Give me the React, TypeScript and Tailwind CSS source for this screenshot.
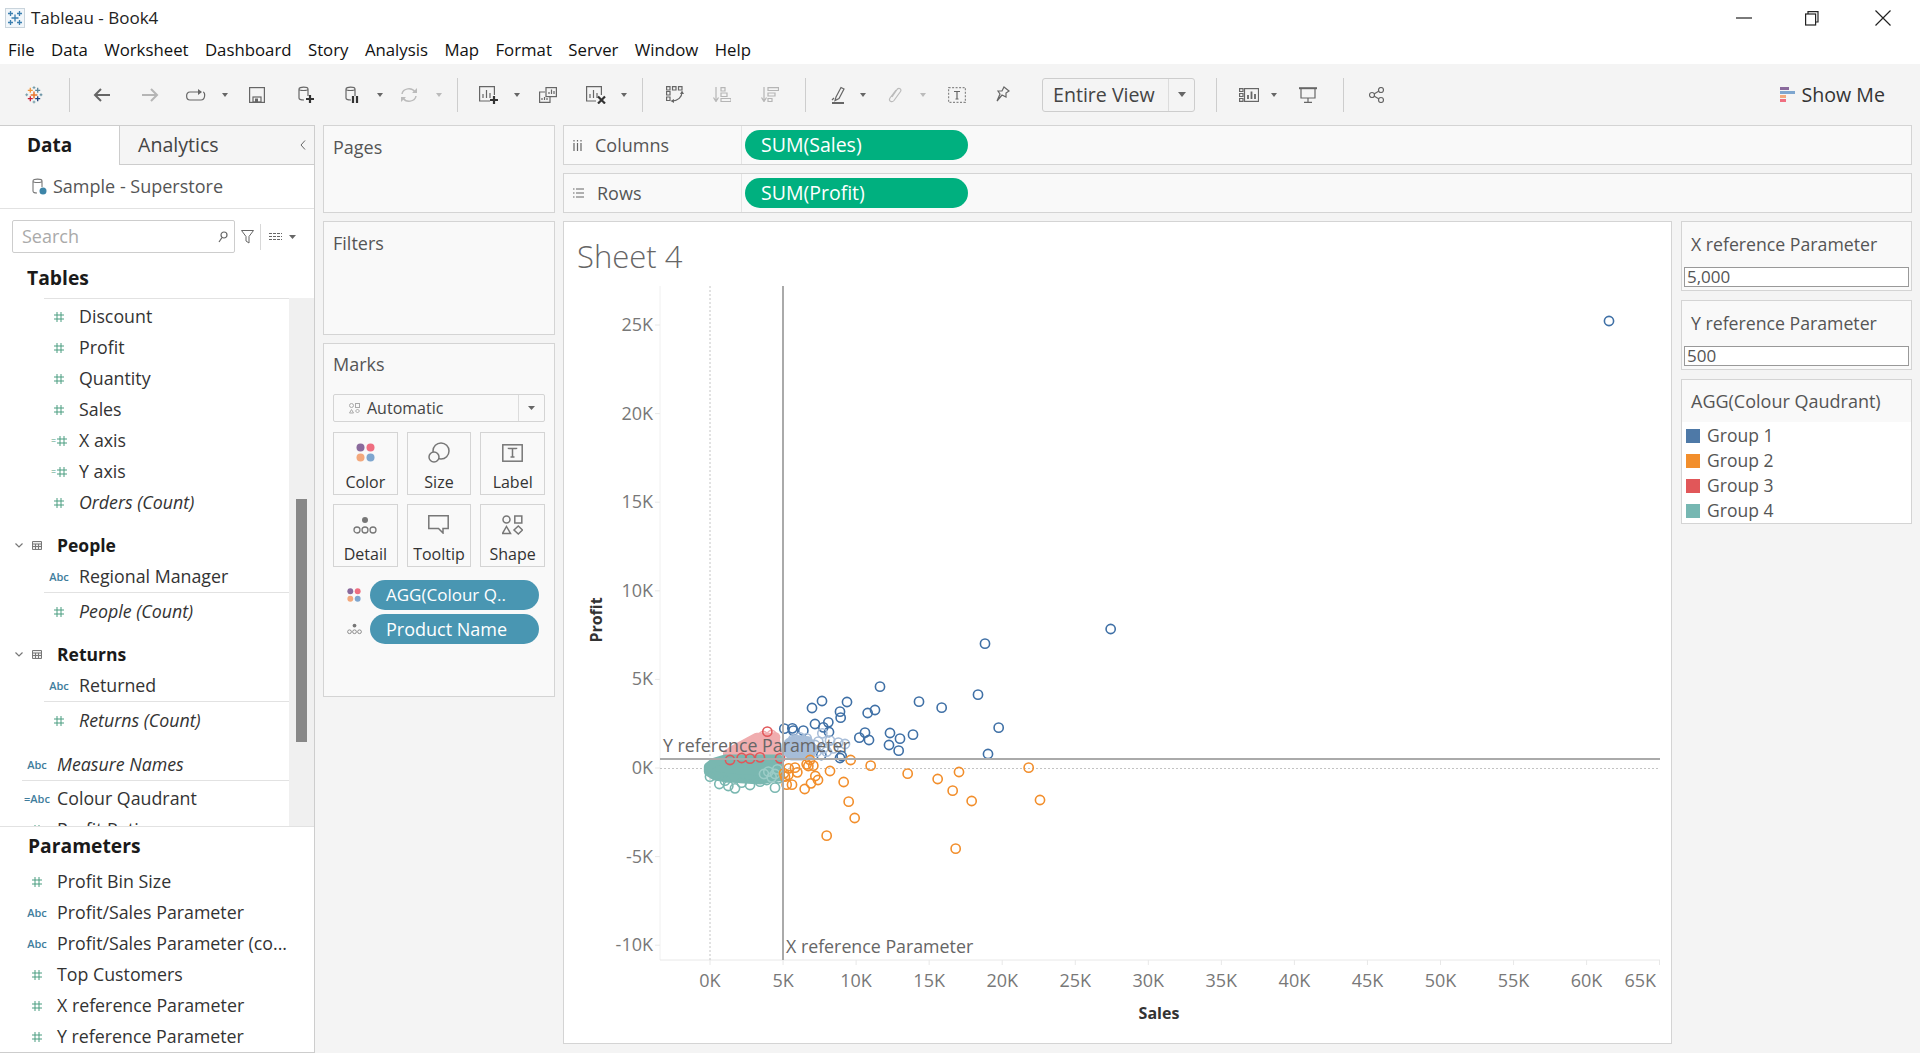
import type { ReactNode } from "react";

type Pt = [number, number];

const font = { fontFamily: "'Open Sans', 'Noto Sans', sans-serif" };

// chart coordinates are page pixels; the cluster is read off a 3x crop at (660,620)
const z = ([x, y]: Pt): Pt => [660 + x / 3, 620 + y / 3];

const BLUE: Pt[] = [
  [975, 71], [660, 200], [954, 224], [777, 245], [561, 246], [486, 243], [456, 264], [845, 263],
  [645, 270], [623, 279], [540, 275], [542, 293], [1016, 323], [465, 312], [505, 307], [490, 322],
  [507, 336], [430, 332], [373, 326], [397, 325], [400, 332], [615, 338], [690, 339], [598, 353],
  [627, 360], [720, 356], [759, 344], [687, 375], [716, 392], [984, 402], [540, 414], [545, 408],
  [484, 405], [1352, 27], [2847, -897],
];
const PALE_BLUE: Pt[] = [
  [555, 372], [535, 368], [510, 362], [487, 340], [475, 365], [440, 355], [420, 352], [400, 358],
  [455, 385], [470, 395], [490, 385], [520, 385], [500, 395], [465, 375], [450, 400],
];
const ORANGE: Pt[] = [
  [572, 420], [632, 437], [510, 453], [743, 461], [833, 477], [897, 456], [1106, 443], [1140, 540],
  [935, 543], [878, 512], [551, 486], [566, 545], [584, 594], [500, 647], [887, 686], [434, 507],
  [453, 490], [474, 480], [466, 468], [396, 494], [380, 494], [412, 457], [386, 445], [405, 443],
  [372, 460], [440, 433], [460, 437], [450, 420], [445, 438], [385, 465], [375, 470],
];
const TEAL: Pt[] = [
  [178, 492], [205, 498], [225, 505], [270, 495], [345, 503], [300, 485], [245, 488], [150, 470],
  [320, 480], [195, 482], [355, 475],
];
const RED: Pt[] = [[322, 335], [210, 420], [245, 414], [270, 416], [300, 412], [360, 415]];
const PALE_RED: Pt[] = [
  [345, 352], [310, 348], [290, 358], [270, 368], [335, 345], [250, 378], [225, 392], [205, 402],
];
const TEAL_SPECK: Pt[] = [[325, 455], [345, 462], [335, 472], [312, 462], [352, 448]];

const LEFT_ROWS = ["25K", "20K", "15K", "10K", "5K", "0K", "-5K", "-10K"];
const X_TICKS = ["0K", "5K", "10K", "15K", "20K", "25K", "30K", "35K", "40K", "45K", "50K", "55K", "60K"];
const MENU = ["File", "Data", "Worksheet", "Dashboard", "Story", "Analysis", "Map", "Format", "Server", "Window", "Help"];

function Rings({ pts, color, opacity = 1 }: { pts: Pt[]; color: string; opacity?: number }) {
  return (
    <g fill="none" stroke={color} strokeWidth={1.6} opacity={opacity}>
      {pts.map((p, i) => {
        const [x, y] = z(p);
        return <circle key={i} cx={x} cy={y} r={4.6} />;
      })}
    </g>
  );
}

function Blob({ pts, color }: { pts: Pt[]; color: string }) {
  return (
    <polygon
      points={pts.map((p) => z(p).join(",")).join(" ")}
      fill={color}
      stroke={color}
      strokeWidth={9}
      strokeLinejoin="round"
    />
  );
}

function Chart() {
  const x0 = 710;
  const step = 73.05;
  return (
    <svg viewBox="564 275 1107 767" className="block h-[767px] w-[1107px]" style={font}>
      {/* axes */}
      <line x1="660" y1="286" x2="660" y2="960" stroke="#f0f0f0" />
      <line x1="660" y1="960" x2="1660" y2="960" stroke="#e8e8e8" />
      {X_TICKS.map((_, i) => (
        <line key={i} x1={x0 + i * step} y1="960" x2={x0 + i * step} y2="965" stroke="#e8e8e8" />
      ))}
      <line x1="1659.5" y1="960" x2="1659.5" y2="965" stroke="#e8e8e8" />
      {LEFT_ROWS.map((_, i) => (
        <line key={i} x1="655" y1={325 + i * 88.6} x2="660" y2={325 + i * 88.6} stroke="#e8e8e8" />
      ))}
      <line x1="710" y1="286" x2="710" y2="960" stroke="#c4c4c4" strokeDasharray="2 2" />
      <line x1="660" y1="768.5" x2="1660" y2="768.5" stroke="#c4c4c4" strokeDasharray="2 2" />

      {/* clusters */}
      <Blob pts={[[205, 405], [215, 392], [290, 352], [345, 352], [355, 410]]} color="#f0adaf" />
      <Rings pts={PALE_RED} color="#f0adaf" />
      <Rings pts={BLUE} color="#3f70a6" />
      <Blob pts={[[385, 400], [385, 368], [405, 358], [445, 362], [460, 392], [430, 408], [395, 408]]} color="#a6bdd8" />
      <Rings pts={PALE_BLUE} color="#a8bed9" />
      <Blob pts={[[145, 440], [160, 428], [195, 417], [355, 417], [362, 470], [300, 480], [205, 474], [165, 468], [145, 455]]} color="#79b7b0" />
      <Rings pts={RED} color="#e15759" />
      <Rings pts={TEAL} color="#79b7b0" />
      <Rings pts={TEAL_SPECK} color="#a5d2cd" opacity={0.8} />
      <Rings pts={ORANGE} color="#f28e2b" />

      {/* reference lines */}
      <line x1="660" y1="759" x2="1660" y2="759" stroke="#aaa" strokeWidth="2" />
      <line x1="783" y1="286" x2="783" y2="960" stroke="#aaa" strokeWidth="2" />

      <g fontSize="17.8" fill="#666">
        <text x="663" y="752">Y reference Parameter</text>
        <text x="786" y="953">X reference Parameter</text>
      </g>
      <g fontSize="18" fill="#787878">
        {LEFT_ROWS.map((t, i) => (
          <text key={t} x="653" y={331 + i * 88.6} textAnchor="end">{t}</text>
        ))}
        {X_TICKS.map((t, i) => (
          <text key={t} x={x0 + i * step} y="987" textAnchor="middle">{t}</text>
        ))}
        <text x="1656" y="987" textAnchor="end">65K</text>
      </g>
      <g fontSize="16" fontWeight="700" fill="#333">
        <text x="1159" y="1019" textAnchor="middle">Sales</text>
        <text transform="translate(602,620) rotate(-90)" textAnchor="middle">Profit</text>
      </g>
    </svg>
  );
}

function Plus({ x, y, a, color, w = 1.3 }: { x: number; y: number; a: number; color: string; w?: number }) {
  return (
    <path d={`M${x - a} ${y}H${x + a}M${x} ${y - a}V${y + a}`} stroke={color} strokeWidth={w} fill="none" />
  );
}

function TableauMark() {
  return (
    <svg width="18" height="18" viewBox="0 0 18 18" className="ml-[25px] shrink-0">
      <Plus x={9} y={9} a={3.4} color="#e8762d" w={1.5} />
      <Plus x={5.3} y={4.3} a={2.5} color="#f0963a" />
      <Plus x={12.7} y={4.3} a={2.5} color="#5b879b" />
      <Plus x={5.3} y={12.7} a={2.5} color="#c72037" />
      <Plus x={12.7} y={12.7} a={2.5} color="#1f447e" />
      <Plus x={9} y={1.6} a={1.4} color="#7099a6" w={1} />
      <Plus x={9} y={16} a={1.4} color="#7099a6" w={1} />
      <Plus x={1.7} y={8.8} a={1.4} color="#7099a6" w={1} />
      <Plus x={16} y={8.8} a={1.4} color="#59879b" w={1} />
    </svg>
  );
}

function Sep({ className }: { className: string }) {
  return <div className={`h-[34px] w-px shrink-0 bg-[#cdcdcd] ${className}`} />;
}

function Caret({ className, light }: { className: string; light?: boolean }) {
  return (
    <svg width="6" height="4" viewBox="0 0 6 4" className={`shrink-0 ${className}`}>
      <path d="M0 0H6L3 4Z" fill={light ? "#bbb" : "#666"} />
    </svg>
  );
}

function Glyph({ w, h, className, children, stroke = "#666" }: { w: number; h: number; className: string; children: ReactNode; stroke?: string }) {
  return (
    <svg width={w} height={h} viewBox={`0 0 ${w} ${h}`} fill="none" stroke={stroke} strokeWidth="1.2" className={`shrink-0 ${className}`}>
      {children}
    </svg>
  );
}

function Cylinder() {
  return <path d="M1 3C1 .5 10 .5 10 3V10M1 3C1 5 10 5 10 3M1 3V12C1 13.5 3 14 6 14" />;
}

function Toolbar() {
  return (
    <div className="flex h-[61px] shrink-0 items-center bg-[#f4f4f4]">
      <TableauMark />
      <Sep className="ml-[26px]" />
      <Glyph w={18} h={14} className="ml-[23px]" stroke="#666">
        <path d="M17 7H2M8 1L2 7L8 13" strokeWidth="2" />
      </Glyph>
      <Glyph w={18} h={14} className="ml-[30px]" stroke="#b5b5b5">
        <path d="M1 7H16M10 1L16 7L10 13" strokeWidth="2" />
      </Glyph>
      <Glyph w={20} h={12} className="ml-[27px]">
        <path d="M12 3H4C-.5 3 -.5 11 4 11H15C19.5 11 19.5 3 17 3" />
        <path d="M12 0L16 3L12 6Z" fill="#666" stroke="none" />
      </Glyph>
      <Caret className="ml-[16px]" />
      <Glyph w={16} h={16} className="ml-[21px]">
        <rect x=".6" y=".6" width="14.8" height="14.8" />
        <rect x="4" y="10" width="8" height="5" />
        <rect x="6" y="11.5" width="3" height="3.5" fill="#666" stroke="none" />
      </Glyph>
      <Glyph w={16} h={17} className="ml-[33px]">
        <Cylinder />
        <path d="M12 9V17M8 13H16" stroke="#333" strokeWidth="2.2" />
      </Glyph>
      <Glyph w={14} h={17} className="ml-[31px]">
        <Cylinder />
        <path d="M8 10V17M12 10V17" stroke="#333" strokeWidth="2.2" />
      </Glyph>
      <Caret className="ml-[18px]" />
      <Glyph w={18} h={16} className="ml-[17px]" stroke="#bbb">
        <path d="M2 7C3 1 12 0 15 5M16 9C15 15 6 16 3 11" strokeWidth="1.5" />
        <path d="M17 1V6H12M1 15V10H6" fill="#bbb" stroke="none" />
      </Glyph>
      <Caret className="ml-[18px]" light />
      <Sep className="ml-[15px]" />
      <Glyph w={20} h={18} className="ml-[21px]">
        <path d="M11 15H.6V.6H15.4V9" />
        <path d="M4 12V8M7.5 12V4M11 12V7" />
        <path d="M15 10V18M11 14H19" stroke="#333" strokeWidth="2.2" />
      </Glyph>
      <Caret className="ml-[15px]" />
      <Glyph w={18} h={16} className="ml-[19px]">
        <rect x="7" y=".6" width="10.4" height="9" />
        <path d="M10 7V5M12.5 7V2.5M15 7V4" />
        <path d="M6 5H.6V15.4H11V10" />
        <path d="M3 13V11M5.5 13V10M8 13V11" />
      </Glyph>
      <Glyph w={20} h={18} className="ml-[29px]">
        <path d="M10 15H.6V.6H15.4V9" />
        <path d="M4 12V8M7.5 12V4M11 12V7" />
        <path d="M12 10.5L19 17.5M19 10.5L12 17.5" stroke="#333" strokeWidth="2.2" />
      </Glyph>
      <Caret className="ml-[15px]" />
      <Sep className="ml-[15px]" />
      <Glyph w={18} h={17} className="ml-[23px]">
        <path d="M.6.6H4V4H.6ZM6.5.6H10V4H6.5ZM12.5.6H16V4H12.5ZM.6 5.5H4V9H.6ZM.6 11H4V14.5H.6Z" />
        <path d="M16 6C16 11 12 15 6 15" />
        <path d="M16 4.5L18 8H14ZM8 13V17L4.5 15Z" fill="#666" stroke="none" />
      </Glyph>
      <Glyph w={18} h={15} className="ml-[29px]" stroke="#b5b5b5">
        <path d="M3 0V13M.5 10.5L3 14.5L5.5 10.5" />
        <path d="M8 .6H12V4H8ZM8 6H14V9.5H8ZM8 11.5H18V14.5H8Z" />
      </Glyph>
      <Glyph w={18} h={15} className="ml-[30px]" stroke="#b5b5b5">
        <path d="M3 0V13M.5 10.5L3 14.5L5.5 10.5" />
        <path d="M7 .6H17.5V3.5H7ZM7 6H14V9H7ZM7 11.5H11V14.5H7Z" />
      </Glyph>
      <Sep className="ml-[26px]" />
      <Glyph w={14} h={18} className="ml-[25px]">
        <path d="M5 11L10 1.5L13 3L8 12.5L4 14.5Z" />
        <path d="M1 14L3 12" />
        <path d="M1 17H13" strokeWidth="2" />
      </Glyph>
      <Caret className="ml-[15px]" />
      <Glyph w={14} h={16} className="ml-[22px]" stroke="#bbb">
        <path d="M4 10L9 2.5C11 .2 14 2 12.5 4.5L6 13.5C4 16 0 14 2 11L8 3" />
      </Glyph>
      <Caret className="ml-[18px]" light />
      <Glyph w={18} h={16} className="ml-[22px]">
        <rect x=".6" y=".6" width="16.8" height="14.8" strokeDasharray="2 1.5" stroke="#888" />
        <path d="M6 4.5H12M9 4.5V12M7.5 12H10.5" />
      </Glyph>
      <Glyph w={14} h={17} className="ml-[30px]">
        <path d="M8 1L13 5L10 7L10 11L6 9L1 15L4 8L2 5L6 5Z" />
      </Glyph>
      <div className="ml-[32px] flex h-[34px] w-[153px] shrink-0 items-center rounded-[3px] border border-[#cdcdcd]">
        <div className="flex-1 whitespace-nowrap pl-[10px] text-[19.6px] text-[#444]">Entire View</div>
        <div className="flex h-full w-[26px] items-center justify-center border-l border-[#dcdcdc]">
          <svg width="8" height="5" viewBox="0 0 8 5"><path d="M0 0H8L4 5Z" fill="#666" /></svg>
        </div>
      </div>
      <Sep className="ml-[21px]" />
      <Glyph w={20} h={14} className="ml-[22px]">
        <path d="M.6.6H4V3.5H.6ZM.6 5.5H4V8.5H.6ZM.6 10.5H4V13.4H.6Z" />
        <rect x="5.5" y=".6" width="14" height="12.8" />
        <path d="M9 11V7M12.5 11V3.5M16 11V6" strokeWidth="1.8" />
      </Glyph>
      <Caret className="ml-[12px]" />
      <Glyph w={18} h={16} className="ml-[22px]">
        <path d="M0 1.2H18" strokeWidth="2" />
        <path d="M2 1.5V11H16V1.5M9 11V15M5 15.4H13" />
      </Glyph>
      <Sep className="ml-[26px]" />
      <Glyph w={15} h={16} className="ml-[25px]">
        <circle cx="3" cy="8" r="2.5" />
        <circle cx="12" cy="3" r="2.5" />
        <circle cx="12" cy="13" r="2.5" />
        <path d="M5 7L10 4M5 9L10 12" />
      </Glyph>
      <div className="ml-auto mr-[35px] flex items-center gap-[7px]">
        <div className="flex w-[15px] flex-col gap-px">
          <div className="h-[3px] w-[9px] bg-[#8a6a9c]" />
          <div className="h-[3px] w-[15px] bg-[#7ea6cf]" />
          <div className="h-[3px] w-[6px] bg-[#f3a87c]" />
          <div className="h-[3px] w-[6px] bg-[#ef6e80]" />
        </div>
        <span className="text-[19.6px] text-[#333]">Show Me</span>
      </div>
    </div>
  );
}

function Hash() {
  return (
    <svg width="10" height="10" viewBox="0 0 10 10" stroke="#4b9d80" strokeWidth="1" fill="none">
      <path d="M3 0V10M7 0V10M0 3H10M0 7H10" />
    </svg>
  );
}

function FieldIcon({ kind }: { kind: string }) {
  if (kind === "#") return <Hash />;
  if (kind === "=#")
    return (
      <span className="flex items-center gap-px">
        <span className="text-[9px] leading-none text-[#4b9d80]">=</span>
        <Hash />
      </span>
    );
  return <span className="text-[11px] font-semibold leading-none text-[#3f7d9c]">{kind}</span>;
}

function Field({ kind, label, italic, nested }: { kind: string; label: string; italic?: boolean; nested?: boolean }) {
  return (
    <div className={`flex h-[31px] items-center whitespace-nowrap ${nested ? "pl-[44px]" : "pl-[22px]"}`}>
      <div className="mr-[5px] flex w-[30px] justify-center">
        <FieldIcon kind={kind} />
      </div>
      <span className={`text-[17.8px] text-[#333] ${italic ? "italic" : ""}`}>{label}</span>
    </div>
  );
}

function TableHead({ label }: { label: string }) {
  return (
    <div className="flex h-[31px] items-center">
      <svg width="8" height="5" viewBox="0 0 8 5" className="ml-[15px]" fill="none" stroke="#777" strokeWidth="1.2">
        <path d="M.5.5L4 4L7.5.5" />
      </svg>
      <svg width="10" height="9" viewBox="0 0 10 9" className="ml-[9px]" fill="#eee" stroke="#777" strokeWidth="1">
        <path d="M.5.5H9.5V8.5H.5ZM.5 3H9.5M.5 5.5H9.5M3.5 3V8.5M6.5 3V8.5" />
      </svg>
      <span className="ml-[15px] text-[17.5px] font-bold text-[#1a1a1a]">{label}</span>
    </div>
  );
}

function Sidebar() {
  return (
    <div className="flex w-[315px] shrink-0 flex-col overflow-hidden border-r border-t border-b border-[#cdcdcd] bg-white">
      <div className="flex h-[39px] shrink-0">
        <div className="flex w-[119px] items-center pl-[27px] text-[19px] font-bold text-[#1a1a1a]">Data</div>
        <div className="flex flex-1 items-center justify-between border-b border-l border-[#cdcdcd] bg-[#f5f5f5] pl-[18px] pr-[8px] text-[19.6px] text-[#444]">
          Analytics
          <svg width="6" height="10" viewBox="0 0 6 10" fill="none" stroke="#666" strokeWidth="1"><path d="M5 .5L1 5L5 9.5" /></svg>
        </div>
      </div>
      <div className="flex h-[44px] shrink-0 items-center border-b border-[#e2e2e2] pb-[1px] pl-[32px]">
        <svg width="15" height="17" viewBox="0 0 15 17" fill="none" stroke="#777" strokeWidth="1.1">
          <path d="M1 3C1 .5 10 .5 10 3V9M1 3C1 5 10 5 10 3M1 3V13C1 14.5 3 15 5 15" />
          <circle cx="11" cy="13" r="3.5" fill="#3d85a8" stroke="none" />
        </svg>
        <span className="ml-[6px] text-[18px] text-[#555]">Sample - Superstore</span>
      </div>
      <div className="flex shrink-0 items-center pl-[12px] pt-[11px]">
        <div className="flex h-[33px] w-[223px] items-center justify-between rounded-[2px] border border-[#cdcdcd] pl-[9px] pr-[6px] text-[18px] text-[#aaa]">
          Search
          <svg width="10" height="12" viewBox="0 0 10 12" fill="none" stroke="#666" strokeWidth="1.2"><circle cx="6" cy="4" r="3" /><path d="M4 6.5L1 11" /></svg>
        </div>
        <svg width="13" height="14" viewBox="0 0 13 14" className="ml-[6px]" fill="none" stroke="#666" strokeWidth="1"><path d="M.5.5H12.5L8 6.5V13L5 11V6.5Z" /></svg>
        <div className="ml-[6px] h-[26px] w-px bg-[#d8d8d8]" />
        <svg width="13" height="9" viewBox="0 0 13 9" className="ml-[8px]" fill="none" stroke="#666" strokeWidth="1"><path d="M0 1.5H13M0 4.5H13M0 7.5H13" strokeDasharray="3 1" /></svg>
        <svg width="7" height="4" viewBox="0 0 7 4" className="ml-[7px]"><path d="M0 0H7L3.5 4Z" fill="#666" /></svg>
      </div>
      <div className="flex h-[45px] shrink-0 items-center pl-[27px] pt-[5px] text-[19.3px] font-bold text-[#1a1a1a]">Tables</div>
      <div className="flex h-[528px] shrink-0">
        <div className="w-[289px] overflow-hidden">
          <div className="ml-[44px] border-t border-[#e2e2e2] pt-[2px]" />
          <Field nested kind="#" label="Discount" />
          <Field nested kind="#" label="Profit" />
          <Field nested kind="#" label="Quantity" />
          <Field nested kind="#" label="Sales" />
          <Field nested kind="=#" label="X axis" />
          <Field nested kind="=#" label="Y axis" />
          <Field nested italic kind="#" label="Orders (Count)" />
          <div className="h-[12px]" />
          <TableHead label="People" />
          <Field nested kind="Abc" label="Regional Manager" />
          <div className="ml-[44px] mb-[3px] border-t border-[#e2e2e2]" />
          <Field nested italic kind="#" label="People (Count)" />
          <div className="h-[12px]" />
          <TableHead label="Returns" />
          <Field kind="Abc" nested label="Returned" />
          <div className="ml-[44px] mb-[3px] border-t border-[#e2e2e2]" />
          <Field nested italic kind="#" label="Returns (Count)" />
          <div className="h-[13px]" />
          <Field italic kind="Abc" label="Measure Names" />
          <div className="ml-[22px] mb-[2px] border-t border-[#e2e2e2]" />
          <Field kind="=Abc" label="Colour Qaudrant" />
          <Field kind="#" label="Profit Ratio" />
        </div>
        <div className="w-[25px] bg-[#f0f0f0] pl-[7px] pt-[201px]">
          <div className="h-[243px] w-[11px] bg-[#888]" />
        </div>
      </div>
      <div className="flex-1 border-t border-[#e2e2e2]">
        <div className="flex h-[39px] items-center pl-[28px] pb-[1px] text-[19.3px] font-bold text-[#1a1a1a]">Parameters</div>
        <Field kind="#" label="Profit Bin Size" />
        <Field kind="Abc" label="Profit/Sales Parameter" />
        <Field kind="Abc" label="Profit/Sales Parameter (co..." />
        <Field kind="#" label="Top Customers" />
        <Field kind="#" label="X reference Parameter" />
        <Field kind="#" label="Y reference Parameter" />
      </div>
    </div>
  );
}

function MarkBtn({ label, children }: { label: string; children: ReactNode }) {
  return (
    <div className="flex h-[63px] flex-col items-center border border-[#d4d4d4] pt-[9px]">
      <div className="flex h-[21px] items-center">{children}</div>
      <div className="mt-[7px] text-[16px] leading-[24px] text-[#333]">{label}</div>
    </div>
  );
}

function ColorDots({ s = 19 }: { s?: number }) {
  return (
    <svg width={s} height={s} viewBox="0 0 19 19">
      <circle cx="4.5" cy="4.5" r="4" fill="#8a6a9c" />
      <circle cx="14.5" cy="4.5" r="4" fill="#ef6e80" />
      <circle cx="4.5" cy="14.5" r="4" fill="#f3a87c" />
      <circle cx="14.5" cy="14.5" r="4" fill="#7ea6cf" />
    </svg>
  );
}

function DetailDots({ s = 24 }: { s?: number }) {
  return (
    <svg width={s} height={s * 0.75} viewBox="0 0 24 18" fill="none" stroke="#777" strokeWidth="1.3">
      <circle cx="12" cy="4" r="3" fill="#777" stroke="none" />
      <circle cx="4" cy="14" r="3" />
      <circle cx="12" cy="14" r="3" />
      <circle cx="20" cy="14" r="3" />
    </svg>
  );
}

function Pill({ color, className, children }: { color: string; className: string; children: ReactNode }) {
  return (
    <div className={`flex h-[30px] items-center whitespace-nowrap rounded-full text-white ${color} ${className}`}>
      {children}
    </div>
  );
}

function Panel({ title, className }: { title: string; className: string }) {
  return (
    <div className={`border border-[#d4d4d4] bg-[#f9f9f9] pl-[9px] pt-[8px] text-[18px] text-[#555] ${className}`}>{title}</div>
  );
}

function Cards() {
  return (
    <div className="flex w-[232px] shrink-0 flex-col gap-[8px]">
      <Panel title="Pages" className="h-[88px]" />
      <Panel title="Filters" className="h-[114px]" />
      <div className="h-[354px] border border-[#d4d4d4] bg-[#f9f9f9] px-[9px] pt-[8px]">
        <div className="text-[18px] leading-[24px] text-[#555]">Marks</div>
        <div className="mt-[18px] flex h-[28px] items-center rounded-[2px] border border-[#d4d4d4]">
          <svg width="11" height="11" viewBox="0 0 11 11" className="ml-[15px]" fill="none" stroke="#aaa" strokeWidth="1">
            <circle cx="2.5" cy="2.5" r="2" /><rect x="6.5" y=".5" width="4" height="4" /><path d="M2.5 6.5L4.5 10H.5Z" /><path d="M8.5 6L10.5 8L8.5 10L6.5 8Z" />
          </svg>
          <span className="ml-[7px] flex-1 text-[16px] text-[#444]">Automatic</span>
          <div className="flex h-full w-[26px] items-center justify-center border-l border-[#dcdcdc]">
            <svg width="7" height="4" viewBox="0 0 7 4"><path d="M0 0H7L3.5 4Z" fill="#666" /></svg>
          </div>
        </div>
        <div className="mt-[10px] grid grid-cols-3 gap-x-[9px] gap-y-[9px]">
          <MarkBtn label="Color"><ColorDots /></MarkBtn>
          <MarkBtn label="Size">
            <svg width="22" height="21" viewBox="0 0 22 21" fill="none" stroke="#777" strokeWidth="1.5">
              <circle cx="13" cy="9" r="8" /><circle cx="6" cy="15" r="5" fill="#f9f9f9" />
            </svg>
          </MarkBtn>
          <MarkBtn label="Label">
            <svg width="21" height="18" viewBox="0 0 21 18" fill="none" stroke="#777" strokeWidth="1.5">
              <rect x=".8" y=".8" width="19.4" height="16.4" />
              <path d="M6.5 5V4.5H14.5V5M10.5 4.5V13M8.5 13H12.5" />
            </svg>
          </MarkBtn>
          <MarkBtn label="Detail"><DetailDots /></MarkBtn>
          <MarkBtn label="Tooltip">
            <svg width="21" height="19" viewBox="0 0 21 19" fill="none" stroke="#777" strokeWidth="1.5">
              <path d="M.8.8H20.2V13.5H15V18L10.5 13.5H.8Z" />
            </svg>
          </MarkBtn>
          <MarkBtn label="Shape">
            <svg width="21" height="20" viewBox="0 0 21 20" fill="none" stroke="#777" strokeWidth="1.5">
              <circle cx="4.5" cy="4.5" r="3.5" /><rect x="12.8" y="1" width="7" height="7" /><path d="M4.5 11.5L8.5 18.5H.5Z" /><path d="M16.3 11L20.5 15L16.3 19L12 15Z" />
            </svg>
          </MarkBtn>
        </div>
        <div className="mt-[13px] flex flex-col gap-[4px]">
          <div className="flex items-center">
            <div className="flex w-[37px] justify-center pl-[5px]"><ColorDots s={14} /></div>
            <Pill color="bg-[#4996b2]" className="w-[169px] pl-[16px] text-[17px]">AGG(Colour Q..</Pill>
          </div>
          <div className="flex items-center">
            <div className="flex w-[37px] justify-center pl-[5px]"><DetailDots s={15} /></div>
            <Pill color="bg-[#4996b2]" className="w-[169px] pl-[16px] text-[18px]">Product Name</Pill>
          </div>
        </div>
      </div>
    </div>
  );
}

function Shelf({ icon, label, pill }: { icon: ReactNode; label: string; pill: string }) {
  return (
    <div className="flex h-[40px] items-center border border-[#d4d4d4] bg-[#f9f9f9]">
      <div className="flex h-full w-[178px] items-center border-r border-[#e4e4e4] pl-[9px]">
        {icon}
        <span className="ml-[13px] text-[18px] text-[#555]">{label}</span>
      </div>
      <Pill color="bg-[#00b07f]" className="ml-[3px] w-[223px] pl-[16px] text-[19.5px]">{pill}</Pill>
    </div>
  );
}

function ParamCard({ title, value }: { title: string; value: string }) {
  return (
    <div className="h-[70px] border border-[#d4d4d4] bg-[#f9f9f9] px-[2px]">
      <div className="flex h-[45px] items-center pb-[1px] pl-[7px] text-[17.7px] text-[#555]">{title}</div>
      <div className="flex h-[20px] items-center border border-[#999] bg-white pl-[2px] text-[17px] text-[#555]">{value}</div>
    </div>
  );
}

function Legend() {
  const groups = [
    ["Group 1", "bg-[#4e79a7]"],
    ["Group 2", "bg-[#f28e2b]"],
    ["Group 3", "bg-[#e15759]"],
    ["Group 4", "bg-[#76b7b2]"],
  ];
  return (
    <div className="h-[145px] border border-[#d4d4d4] bg-white">
      <div className="flex h-[42px] items-center bg-[#f9f9f9] pl-[9px] text-[18px] text-[#555]">AGG(Colour Qaudrant)</div>
      <div className="pt-[1px]">
        {groups.map(([g, c]) => (
          <div key={g} className="flex h-[25px] items-center pl-[4px]">
            <div className={`h-[14px] w-[14px] ${c}`} />
            <span className="ml-[7px] text-[17.5px] text-[#555]">{g}</span>
          </div>
        ))}
      </div>
    </div>
  );
}

export default function App() {
  return (
    <div className="flex h-[1053px] w-[1920px] flex-col overflow-hidden bg-[#f4f4f4]" style={font}>
      <div className="flex h-[36px] shrink-0 items-center bg-white pl-[5px]">
        <svg width="20" height="20" viewBox="0 0 20 20">
          <rect x=".5" y=".5" width="19" height="19" fill="#f1f6fa" stroke="#c9d4dc" />
          <Plus x={10} y={10} a={3.5} color="#3b7fb0" />
          <Plus x={5.5} y={5.5} a={2.5} color="#3b7fb0" />
          <Plus x={14.5} y={5.5} a={2.5} color="#3b7fb0" />
          <Plus x={5.5} y={14.5} a={2.5} color="#3b7fb0" />
          <Plus x={14.5} y={14.5} a={2.5} color="#3b7fb0" />
        </svg>
        <span className="ml-[6px] text-[17px] text-[#222]">Tableau - Book4</span>
        <div className="ml-auto flex items-center">
          <svg width="16" height="2" viewBox="0 0 16 2"><path d="M0 1H16" stroke="#222" strokeWidth="1.2" /></svg>
          <svg width="14" height="15" viewBox="0 0 14 15" className="ml-[53px]" fill="none" stroke="#222" strokeWidth="1.2">
            <rect x=".6" y="3" width="10" height="11" /><path d="M3 3V.6H13V11H10.6" />
          </svg>
          <svg width="16" height="16" viewBox="0 0 16 16" className="ml-[56px] mr-[29px]" fill="none" stroke="#222" strokeWidth="1.2">
            <path d="M.5.5L15.5 15.5M15.5.5L.5 15.5" />
          </svg>
        </div>
      </div>
      <div className="flex h-[28px] shrink-0 items-center gap-[16.4px] bg-white pl-[8px] text-[16.8px] text-[#111]">
        {MENU.map((m) => (
          <span key={m}>{m}</span>
        ))}
      </div>
      <Toolbar />
      <div className="flex h-[928px] items-stretch gap-[8px] pr-[8px]">
        <Sidebar />
        <Cards />
        <div className="flex flex-1 flex-col gap-[8px]">
          <Shelf
            label="Columns"
            pill="SUM(Sales)"
            icon={
              <svg width="9" height="11" viewBox="0 0 9 11" stroke="#666" strokeWidth="1.2">
                <path d="M1 3V11M4.5 3V11M8 3V11M1 0V1.5M4.5 0V1.5M8 0V1.5" />
              </svg>
            }
          />
          <Shelf
            label="Rows"
            pill="SUM(Profit)"
            icon={
              <svg width="11" height="10" viewBox="0 0 11 10" stroke="#666" strokeWidth="1.2">
                <path d="M3 1H11M3 5H11M3 9H11M0 1H1.5M0 5H1.5M0 9H1.5" />
              </svg>
            }
          />
          <div className="flex gap-[9px]">
            <div className="h-[823px] w-[1109px] border border-[#d4d4d4] bg-white">
              <div className="flex h-[53px] items-center pl-[13px] pt-[16px] text-[31px] font-light text-[#666]">Sheet 4</div>
              <Chart />
            </div>
            <div className="flex w-[231px] flex-col gap-[9px]">
              <ParamCard title="X reference Parameter" value="5,000" />
              <ParamCard title="Y reference Parameter" value="500" />
              <Legend />
            </div>
          </div>
        </div>
      </div>
    </div>
  );
}
